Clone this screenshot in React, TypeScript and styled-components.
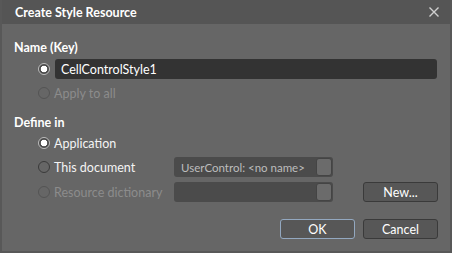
import React from "react";
import styled, { createGlobalStyle } from "styled-components";

const GlobalStyle = createGlobalStyle`
  html, body {
    margin: 0;
    padding: 0;
    background: #5a5a5a;
  }
  body {
    font-family: "Segoe UI", Lato, "Open Sans", sans-serif;
    font-size: 12.5px;
  }
`;

const Frame = styled.div`
  width: 452px;
  height: 253px;
  box-sizing: border-box;
  background: #585858;
  padding: 0 2px 2px 2px;
  display: flex;
  flex-direction: column;
`;

const TitleBar = styled.div`
  height: 24px;
  display: flex;
  align-items: center;
  justify-content: space-between;
  padding: 0 10px 0 13px;
  background: #555555;
`;

const Title = styled.div`
  color: #ffffff;
  font-weight: 700;
  font-size: 12.5px;
`;

const Body = styled.div`
  flex: 1;
  background: #666666;
  padding: 16px 12px 0 12px;
  display: flex;
  flex-direction: column;
`;

const SectionLabel = styled.div<{ $top?: number }>`
  height: 16px;
  line-height: 16px;
  color: #ffffff;
  font-weight: 700;
  margin-top: ${(p) => p.$top ?? 0}px;
`;

const OptionRow = styled.div<{ $top?: number }>`
  height: 20px;
  display: flex;
  align-items: center;
  margin-left: 24px;
  margin-top: ${(p) => p.$top ?? 0}px;
`;

const Radio = styled.span<{ $checked?: boolean; $disabled?: boolean }>`
  width: 12px;
  height: 12px;
  box-sizing: border-box;
  border-radius: 50%;
  flex: none;
  margin-right: 4px;
  border: 1px solid ${(p) => (p.$disabled ? "#545454" : p.$checked ? "#bcbcbc" : "#3a3a3a")};
  background: ${(p) =>
    p.$checked
      ? "radial-gradient(circle, #ffffff 0, #ffffff 3px, #4a4a4a 3.6px, #4a4a4a 100%)"
      : "transparent"};
`;

const OptionText = styled.span<{ $disabled?: boolean; $width?: number }>`
  color: ${(p) => (p.$disabled ? "#8c8c8c" : "#f4f4f4")};
  width: ${(p) => (p.$width ? `${p.$width}px` : "auto")};
  flex: none;
  white-space: nowrap;
`;

const TextField = styled.div`
  flex: 1;
  height: 20px;
  margin-left: 1px;
  margin-right: 1px;
  border-radius: 3px;
  background: #333333;
  color: #ffffff;
  padding-left: 6px;
  display: flex;
  align-items: center;
`;

const Combo = styled.div`
  width: 159px;
  height: 20px;
  flex: none;
  box-sizing: border-box;
  border-radius: 3px;
  background: #4b4b4b;
  color: #bdbdbd;
  font-size: 11.5px;
  display: flex;
  align-items: center;
  justify-content: space-between;
  padding: 0 1px 0 7px;
  white-space: nowrap;
  overflow: hidden;
`;

const ComboButton = styled.span`
  width: 16px;
  height: 18px;
  flex: none;
  box-sizing: border-box;
  border-radius: 3px;
  border: 1px solid #444444;
  background: #6b6b6b;
`;

const Button = styled.div<{ $primary?: boolean }>`
  width: 75px;
  height: 20px;
  flex: none;
  box-sizing: border-box;
  border-radius: 3px;
  border: 1px solid ${(p) => (p.$primary ? "#93a8c0" : "#3a3a3a")};
  background: #575757;
  color: #ffffff;
  display: flex;
  align-items: center;
  justify-content: center;
`;

const Spacer = styled.div`
  flex: 1;
`;

const ButtonRow = styled.div`
  display: flex;
  justify-content: flex-end;
  gap: 8px;
  margin-top: 17px;
`;

function CloseIcon() {
  return (
    <svg width="12" height="12" viewBox="0 0 12 12">
      <path d="M1.5 1.5 L10.5 10.5 M10.5 1.5 L1.5 10.5" stroke="#d0d0d0" strokeWidth="1.4" />
    </svg>
  );
}

export default function App() {
  return (
    <>
      <GlobalStyle />
      <Frame>
        <TitleBar>
          <Title>Create Style Resource</Title>
          <CloseIcon />
        </TitleBar>
        <Body>
          <SectionLabel>Name (Key)</SectionLabel>
          <OptionRow $top={3}>
            <Radio $checked />
            <TextField>CellControlStyle1</TextField>
          </OptionRow>
          <OptionRow $top={4}>
            <Radio $disabled />
            <OptionText $disabled>Apply to all</OptionText>
          </OptionRow>
          <SectionLabel $top={12}>Define in</SectionLabel>
          <OptionRow $top={2}>
            <Radio $checked />
            <OptionText>Application</OptionText>
          </OptionRow>
          <OptionRow $top={4}>
            <Radio />
            <OptionText $width={120}>This document</OptionText>
            <Combo>
              <span>UserControl: &lt;no name&gt;</span>
              <ComboButton />
            </Combo>
          </OptionRow>
          <OptionRow $top={5}>
            <Radio $disabled />
            <OptionText $disabled $width={120}>
              Resource dictionary
            </OptionText>
            <Combo>
              <span />
              <ComboButton />
            </Combo>
            <Spacer />
            <Button>New...</Button>
          </OptionRow>
          <ButtonRow>
            <Button $primary>OK</Button>
            <Button>Cancel</Button>
          </ButtonRow>
        </Body>
      </Frame>
    </>
  );
}
